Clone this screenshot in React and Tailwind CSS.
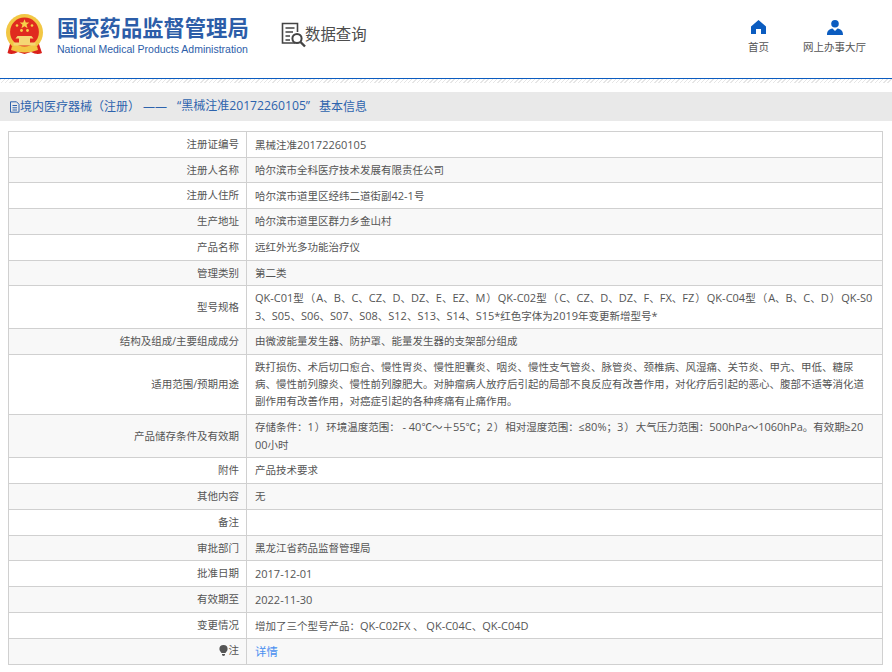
const rows = [
  { h: 'h-[26px]', k: '注册证编号', v: ['黑械注准20172260105'] },
  { h: 'h-[25px]', k: '注册人名称', v: ['哈尔滨市全科医疗技术发展有限责任公司'] },
  { h: 'h-[26px]', k: '注册人住所', v: ['哈尔滨市道里区经纬二道街副42-1号'] },
  { h: 'h-[26px]', k: '生产地址', v: ['哈尔滨市道里区群力乡金山村'] },
  { h: 'h-[26px]', k: '产品名称', v: ['远红外光多功能治疗仪'] },
  { h: 'h-[25px]', k: '管理类别', v: ['第二类'] },
  { h: 'h-[43px]', k: '型号规格', v: ['QK-C01型（A、B、C、CZ、D、DZ、E、EZ、M）QK-C02型（C、CZ、D、DZ、F、FX、FZ）QK-C04型（A、B、C、D）QK-S0', '3、S05、S06、S07、S08、S12、S13、S14、S15*红色字体为2019年变更新增型号*'] },
  { h: 'h-[26px]', k: '结构及组成/主要组成成分', v: ['由微波能量发生器、防护罩、能量发生器的支架部分组成'] },
  { h: 'h-[60px]', k: '适用范围/预期用途', v: ['跌打损伤、术后切口愈合、慢性胃炎、慢性胆囊炎、咽炎、慢性支气管炎、脉管炎、颈椎病、风湿痛、关节炎、甲亢、甲低、糖尿', '病、慢性前列腺炎、慢性前列腺肥大。对肿瘤病人放疗后引起的局部不良反应有改善作用，对化疗后引起的恶心、腹部不适等消化道', '副作用有改善作用，对癌症引起的各种疼痛有止痛作用。'] },
  { h: 'h-[43px]', k: '产品储存条件及有效期', v: ['存储条件：1）环境温度范围： - 40℃～＋55℃；2）相对湿度范围：≤80%；3）大气压力范围：500hPa～1060hPa。有效期≥20', '00小时'] },
  { h: 'h-[26px]', k: '附件', v: ['产品技术要求'] },
  { h: 'h-[26px]', k: '其他内容', v: ['无'] },
  { h: 'h-[26px]', k: '备注', v: [] },
  { h: 'h-[25px]', k: '审批部门', v: ['黑龙江省药品监督管理局'] },
  { h: 'h-[26px]', k: '批准日期', v: ['2017-12-01'] },
  { h: 'h-[26px]', k: '有效期至', v: ['2022-11-30'] },
  { h: 'h-[26px]', k: '变更情况', v: ['增加了三个型号产品：QK-C02FX 、 QK-C04C、QK-C04D'] },
];

// Latin runs are set a touch larger than the CJK text, and full-width brackets get air around them.
function Mixed({ text }) {
  return text.split(/([A-Za-z0-9*%/-]+|[（）])/).map((part, i) => {
    if (i % 2 === 0) return part;
    if (part === '（' || part === '）') return <span key={i} className="px-[1px]">{part}</span>;
    return <span key={i} className="text-[11px]">{part}</span>;
  });
}

function Emblem() {
  return (
    <svg width="40" height="42" viewBox="0 0 40 42" className="shrink-0">
      <path d="M4 30 L1.5 39 Q6 41.5 12 38 L18.5 40 L25 38 Q31 41.5 36 39 L33 30 Z" fill="#d9201c" />
      <circle cx="18.5" cy="18.5" r="18.5" fill="#f2c744" />
      <circle cx="18.5" cy="18" r="14.4" fill="#e02a1f" />
      <polygon points="18.5,5.2 19.8,8.6 23.3,8.6 20.5,10.8 21.6,14.2 18.5,12.2 15.4,14.2 16.5,10.8 13.7,8.6 17.2,8.6" fill="#f6d24a" />
      <circle cx="11" cy="11.5" r="1.3" fill="#f6d24a" />
      <circle cx="26" cy="11.5" r="1.3" fill="#f6d24a" />
      <circle cx="15.5" cy="16.5" r="1.4" fill="#f6d24a" />
      <circle cx="21.5" cy="16.5" r="1.4" fill="#f6d24a" />
      <path d="M11.5 22h14l2 2.5h-18z M13 24.5h11v4H13z M7.5 28.5h22v3h-22z" fill="#f5d774" />
      <path d="M6 32 Q18.5 39 31 32 L32 36 Q18.5 41 5 36Z" fill="#f2c744" />
    </svg>
  );
}

function DataIcon() {
  return (
    <svg width="26" height="26" viewBox="0 0 26 26" fill="none" stroke="#444" className="shrink-0">
      <path d="M14 21H1.5V1.5H16.5V10" strokeWidth="1.6" />
      <path d="M4.5 6H13.5M4.5 10H12M4.5 14H9M4.5 18H9" strokeWidth="1.5" />
      <circle cx="16" cy="16.5" r="4.6" strokeWidth="2" />
      <path d="M19.5 20L24 24.5" strokeWidth="2.4" />
    </svg>
  );
}

function DocIcon() {
  return (
    <svg width="11" height="12" viewBox="0 0 11 12" fill="none" stroke="#2d63ad" className="shrink-0">
      <path d="M1.5 .8H7.5L10 3.3V11.2H1.5Z" />
      <path d="M3.5 4.5H8M3.5 6.8H8M3.5 9H8" />
    </svg>
  );
}

function Bulb() {
  return (
    <svg width="9" height="11" viewBox="0 0 9 11" fill="#555" className="shrink-0">
      <path d="M4.5 0A4.1 4.1 0 0 0 .4 4.1C.4 6 1.8 6.8 2.5 8h4C7.2 6.8 8.6 6 8.6 4.1A4.1 4.1 0 0 0 4.5 0Z" />
      <path d="M3 9h3v1.2L4.5 11 3 10.2Z" />
    </svg>
  );
}

const cjk = "font-['Open_Sans','Noto_Sans_CJK_SC',sans-serif]";

export default function App() {
  return (
    <div className={`w-[892px] h-[672px] overflow-hidden bg-white ${cjk}`}>
      <header className="h-[78px] flex items-start">
        <div className="flex items-center pl-[6px] pt-[13px]">
          <Emblem />
          <div className="ml-[11px] w-[192px]">
            <div className="text-[21.3px] leading-[26px] mt-[2px] font-bold text-[#2c5da8] whitespace-nowrap">国家药品监督管理局</div>
            <div className="text-[10.5px] leading-[14px] mt-[1px] text-[#2c5da8] whitespace-nowrap font-['Liberation_Sans',sans-serif]">National Medical Products Administration</div>
          </div>
        </div>
        <div className="flex items-center ml-[32px] pt-[22px]">
          <DataIcon />
          <span className="text-[15.4px] leading-[26px] text-[#4d4d4d] whitespace-nowrap -ml-[2px]">数据查询</span>
        </div>
        <nav className="ml-auto flex pt-[20px] pr-[26px]">
          <div className="flex flex-col items-center mr-[34px]">
            <svg width="15" height="14" viewBox="0 0 15 14" fill="#0b5cc0">
              <path d="M7.5 0L15 6.5V14H10V9H5V14H0V6.5Z" />
            </svg>
            <span className="text-[10.5px] leading-[14px] mt-[6px] text-[#555]">首页</span>
          </div>
          <div className="flex flex-col items-center">
            <svg width="16" height="15" viewBox="0 0 16 15" fill="#0b5cc0">
              <circle cx="8" cy="3.8" r="3.8" />
              <path d="M0 15C0 11 2 9.5 5.5 8.6L8 11L10.5 8.6C14 9.5 16 11 16 15Z" />
            </svg>
            <span className="text-[10.5px] leading-[14px] mt-[5px] text-[#555] whitespace-nowrap">网上办事大厅</span>
          </div>
        </nav>
      </header>
      <div className="h-[1px] bg-[#0b5cc0]" />
      <div className="h-[4px] bg-[repeating-linear-gradient(135deg,#e6e6e6_0,#e6e6e6_1px,#ffffff_1px,#ffffff_3px)]" />
      <div className="h-[29px] mt-[9px] bg-[#e9e9e9] flex items-center pl-[9px] text-[12px] text-[#2d63ad] whitespace-nowrap">
        <DocIcon />
        <span>境内医疗器械（注册）</span>
        <span className="ml-[3px]">——</span>
        <span className="ml-[10px]">“黑械注准<span className="text-[12.2px]">20172260105</span>”</span>
        <span className="ml-[9px]">基本信息</span>
      </div>
      <table className="ml-[8px] mt-[10px] w-[875px] table-fixed border-collapse border border-[#d0d0d0] text-[10.5px] leading-[17px] text-[#555]">
        <colgroup>
          <col className="w-[238px]" />
          <col />
        </colgroup>
        <tbody>
          {rows.map((r, i) => (
            <tr key={r.k} className={`${r.h} border-b border-[#d0d0d0] ${i % 2 ? 'bg-[#f8f8f8]' : 'bg-white'}`}>
              <td className="text-right pr-[7px] border-r border-[#d0d0d0] p-0">{r.k}</td>
              <td className="pl-[8px] p-0 whitespace-nowrap">
                {r.v.map((l) => (
                  <div key={l}><Mixed text={l} /></div>
                ))}
              </td>
            </tr>
          ))}
          <tr className="h-[26px] border-b border-[#d0d0d0] bg-[#f8f8f8]">
            <td className="text-right pr-[7px] border-r border-[#d0d0d0] p-0">
              <span className="inline-flex items-center justify-end gap-[1px]">
                <Bulb />注
              </span>
            </td>
            <td className="pl-[8px] p-0 text-[11.4px] text-[#4a90f0]">详情</td>
          </tr>
        </tbody>
      </table>
    </div>
  );
}
